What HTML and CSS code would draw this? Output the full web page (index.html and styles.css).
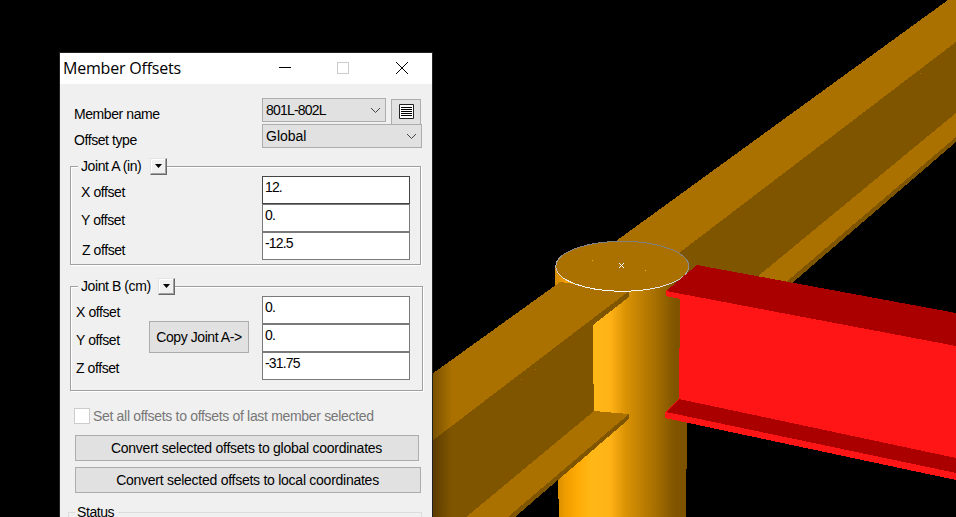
FILE: index.html
```html
<!DOCTYPE html>
<html lang="en">
<head>
<meta charset="utf-8">
<title>Member Offsets</title>
<link rel="stylesheet" href="styles.css">
</head>
<body>
<main class="workspace">
  <svg class="scene" viewBox="0 0 956 517" shape-rendering="crispEdges" aria-hidden="true">
    <defs>
      <linearGradient id="column" gradientUnits="userSpaceOnUse" x1="556" y1="0" x2="688" y2="0">
        <stop offset="0" stop-color="#d58c00"/>
        <stop offset=".07" stop-color="#ee9d00"/>
        <stop offset=".16" stop-color="#ffaa05"/>
        <stop offset=".27" stop-color="#ffb817"/>
        <stop offset=".41" stop-color="#ffb216"/>
        <stop offset=".53" stop-color="#d99204"/>
        <stop offset=".74" stop-color="#aa7100"/>
        <stop offset=".9" stop-color="#805500"/>
        <stop offset="1" stop-color="#7c5200"/>
      </linearGradient>
      <linearGradient id="rim" x1=".3" y1="1" x2=".5" y2="0">
        <stop offset="0" stop-color="#fff"/>
        <stop offset=".25" stop-color="#ddd"/>
        <stop offset=".65" stop-color="#888"/>
        <stop offset="1" stop-color="#808080"/>
      </linearGradient>
      <linearGradient id="shade" gradientUnits="userSpaceOnUse" x1="432" y1="0" x2="452" y2="0">
        <stop offset="0" stop-color="#000" stop-opacity=".3"/>
        <stop offset="1" stop-color="#000" stop-opacity="0"/>
      </linearGradient>
    </defs>
    <!-- rear beam -->
    <path fill="#aa7100" d="M616 241 948 0H956V44L680 255 640 290Z"/>
    <path fill="#805500" d="M679 253 956 42V142L791 284 700 300Z"/>
    <path fill="#aa7100" d="M757 277 956 113V137L785 283Z"/>
    <!-- column -->
    <path fill="url(#column)" d="M555 266H688V290L687 300V469H686V517H559V499H558V480L555 300Z"/>
    <!-- front beam -->
    <path fill="#aa7100" d="M432 374 560 282 628 291V293L432 444Z"/>
    <path fill="#805500" d="M432 441 629 291V297L593 325V356L594 411V415L474 517H432Z"/>
    <path fill="#aa7100" d="M594 411 629 414V415L508 518H465Z"/>
    <path fill="#805500" d="M629 414V419L515 517H508Z"/>
    <path fill="#000" d="M515 517 558 480V499H559V517Z"/>
    <path fill="url(#shade)" d="M432 374 456 357V517H432Z"/>
    <!-- column cap -->
    <ellipse cx="622.3" cy="266.3" rx="66.5" ry="25" fill="#aa7100" stroke="url(#rim)"/>
    <path stroke="#fff" d="M619 263 624 268M624 263 619 268" shape-rendering="auto"/>
    <path fill="#ffb216" d="M592 260h1v1h-1zM645 270h1v1h-1z"/>
    <path fill="#aa7100" d="M535 369h1v1h-1zM521 379h1v1h-1zM920 73h1v1h-1z"/>
    <!-- selected beam -->
    <path fill="#ff1515" d="M666 290 956 345V480L665 418V412L679 399 680 299 666 296Z"/>
    <path fill="#a00" d="M697 265 956 313V346L666 291Z"/>
    <path fill="#a00" d="M679 399 956 458V473L666 412Z"/>
  </svg>

  <section class="dialog">
    <header class="titlebar">
      <h1>Member Offsets</h1>
      <svg class="controls" viewBox="0 0 160 31" fill="none" stroke="#000">
        <path d="M7 14.5H19"/>
        <rect x="65.5" y="9.5" width="11" height="11" stroke="#ccc"/>
        <path d="M124 9 136 21M136 9 124 21"/>
      </svg>
    </header>

    <div class="general">
      <div class="labels"><span>Member name</span><span>Offset type</span></div>
      <div class="pickers">
        <div class="picker-row">
          <div class="select member"><span>801L-802L</span><svg class="chev" viewBox="0 0 11 7"><path d="M1 1 5.5 5.5 10 1"/></svg></div>
          <div class="list-btn"><svg viewBox="0 0 15 15"><path fill="#fff" stroke="#222" d="M.5.5h14v14H.5z"/><path stroke="#000" d="M2 3.5h11M2 5.5h11M2 7.5h11M2 9.5h11M2 11.5h11"/></svg></div>
        </div>
        <div class="select type"><span>Global</span><svg class="chev" viewBox="0 0 11 7"><path d="M1 1 5.5 5.5 10 1"/></svg></div>
      </div>
    </div>

    <div class="group joint-a">
      <div class="legend"><span>Joint A (in)</span><b class="drop"><svg viewBox="0 0 7 4"><path d="M0 0H7L3.5 4Z"/></svg></b></div>
      <div class="rows">
        <div class="names"><span>X offset</span><span>Y offset</span><span class="z">Z offset</span></div>
        <div class="fields"><div class="field focus">12.</div><div class="field">0.</div><div class="field">-12.5</div></div>
      </div>
    </div>

    <div class="group joint-b">
      <div class="legend"><span>Joint B (cm)</span><b class="drop"><svg viewBox="0 0 7 4"><path d="M0 0H7L3.5 4Z"/></svg></b></div>
      <div class="rows">
        <div class="names"><span>X offset</span><span>Y offset</span><span>Z offset</span></div>
        <div class="btn copy">Copy Joint A-&gt;</div>
        <div class="fields"><div class="field">0.</div><div class="field">0.</div><div class="field">-31.75</div></div>
      </div>
    </div>

    <div class="check"><i></i><span>Set all offsets to offsets of last member selected</span></div>
    <div class="btn convert">Convert selected offsets to global coordinates</div>
    <div class="btn convert local">Convert selected offsets to local coordinates</div>
    <div class="group status"><div class="legend"><span>Status</span></div></div>
  </section>
</main>
</body>
</html>
```
FILE: styles.css
```css
* { box-sizing: border-box; }
body { margin: 0; background: #000; overflow: hidden; }
.workspace {
  position: relative;
  width: 956px;
  height: 517px;
  overflow: hidden;
  font: 14px/16px "Liberation Sans", Arial, sans-serif;
  letter-spacing: -.42px;
  color: #000;
  white-space: nowrap;
}
.scene { position: absolute; inset: 0; width: 956px; height: 517px; }
.dialog {
  position: absolute;
  left: 59px;
  top: 52px;
  width: 374px;
  height: 480px;
  border: 1px solid #222;
  background: #f0f0f0;
}
svg { display: block; }

.titlebar { display: flex; justify-content: space-between; height: 31px; background: #fff; }
.titlebar h1 {
  margin: 0 0 0 3px;
  font: 400 16px/31px "Open Sans", "Noto Sans", sans-serif;
  letter-spacing: -.2px;
}
.controls { width: 160px; height: 31px; }

.general { display: flex; padding: 14px 0 0 14px; height: 74px; }
.labels { width: 188px; padding-top: 8px; display: flex; flex-direction: column; gap: 10px; }
.picker-row { display: flex; gap: 5px; height: 26px; }
.select {
  display: flex;
  align-items: center;
  justify-content: space-between;
  height: 24px;
  padding: 0 4px 0 3px;
  border: 1px solid #adadad;
  background: #e1e1e1;
}
.member { width: 124px; letter-spacing: -.8px; }
.type { width: 160px; letter-spacing: 0; }
.chev { width: 11px; height: 7px; fill: none; stroke: #444; }
.list-btn {
  width: 30px;
  height: 25px;
  margin-top: 1px;
  padding: 4px 0 0 7px;
  border: 1px solid #adadad;
  border-bottom: 0;
  background: #e1e1e1;
}
.list-btn svg { width: 15px; height: 15px; fill: none; }

.group { margin-left: 10px; border: 1px solid #a0a0a0; box-shadow: 1px 1px #fff, inset 1px 1px #fff; }
.joint-a { width: 351px; height: 99px; margin-top: 8px; }
.joint-b { width: 353px; height: 105px; margin-top: 21px; }
.legend { display: flex; align-items: center; height: 18px; margin-top: -10px; margin-bottom: 1px; }
.legend span { margin-left: 7px; padding: 0 4px 0 3px; background: #f0f0f0; }
.joint-a .legend span, .joint-b .legend span { flex: 1; }
.drop {
  display: flex;
  align-items: center;
  justify-content: center;
  width: 17px;
  height: 17px;
  border: 1px solid;
  border-color: #e3e3e3 #696969 #696969 #e3e3e3;
  box-shadow: inset -1px -1px #a0a0a0, inset 1px 1px #fff;
  background: #f0f0f0;
}
.joint-a .legend { width: 96px; }
.joint-b .legend { width: 104px; }
.drop svg { width: 7px; height: 4px; }

.rows { display: flex; }
.joint-a .names { width: 191px; padding-left: 10px; }
.joint-b .names { width: 78px; padding-left: 5px; }
.names { padding-top: 8px; display: flex; flex-direction: column; gap: 12px; }
.names .z { margin-top: 2px; padding-left: 1px; }
.fields { width: 148px; }
.field {
  height: 28px;
  padding: 2px 0 0 2px;
  border: 1px solid #7a7a7a;
  background: #fff;
  letter-spacing: -.85px;
}
.focus { border-color: #444; }
.btn {
  display: flex;
  align-items: center;
  justify-content: center;
  border: 1px solid #adadad;
  background: #e1e1e1;
}
.copy { width: 100px; height: 32px; margin: 25px 13px 0 0; }

.check { display: flex; align-items: center; gap: 3px; margin: 17px 0 0 14px; color: #777; letter-spacing: -.32px; }
.check i { width: 16px; height: 16px; border: 1px solid #ccc; background: #fff; }
.convert { width: 344px; height: 26px; margin: 11px 0 0 15px; padding-right: 1px; letter-spacing: -.26px; }
.local { width: 346px; margin-top: 6px; }
.status { width: 354px; height: 60px; margin: 19px 0 0 8px; border-color: #dcdcdc; box-shadow: none; }
.status .legend span { margin-left: 6px; padding-left: 2px; }
```
